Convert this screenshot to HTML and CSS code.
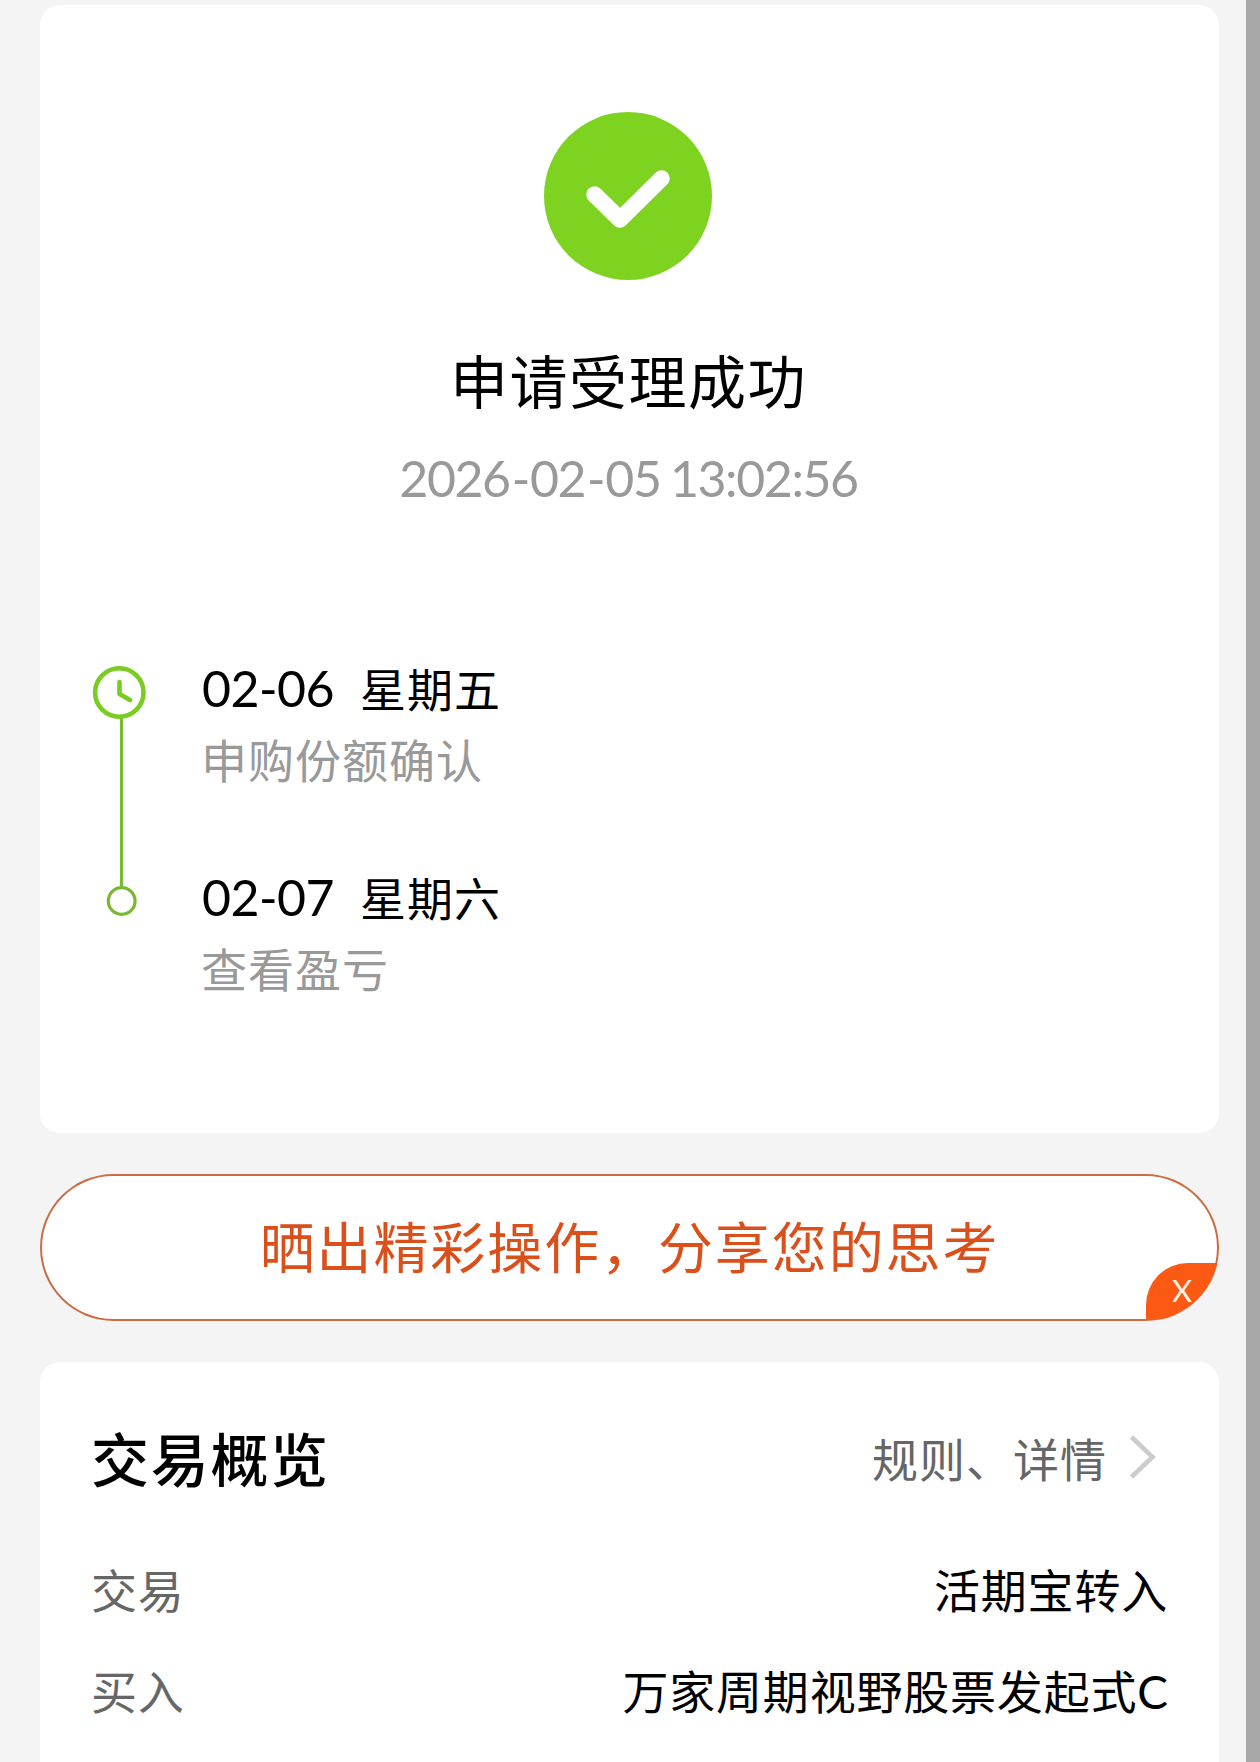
FILE: index.html
```html
<!DOCTYPE html>
<html lang="zh-CN">
	<head>
		<meta charset="UTF-8">
		<title>申请受理成功</title>
		<link rel="stylesheet" href="styles.css">
	</head>
	<body>
		<div class="card result">
			<svg class="ok" viewBox="0 0 168 168">
				<circle cx="84" cy="84" r="84" fill="#7ed321"/>
				<path d="M50.500 82.500L76 107.500L117.500 66.500" fill="none" stroke="#fff" stroke-width="16.500" stroke-linecap="round" stroke-linejoin="round"/>
			</svg>
			<h1>申请受理成功</h1>
			<p class="time num">2026<i>-</i>02<i>-</i>05 13:02:56</p>

			<div class="steps">
				<!-- 时间轴 -->
				<svg class="rail" viewBox="0 0 56 252">
					<path d="M30.500 53V222" stroke="#78b833" stroke-width="3"/>
					<circle cx="28.300" cy="27.500" r="24.200" fill="none" stroke="#7acb22" stroke-width="4.600"/>
					<path d="M28.500 17V29L39 35" fill="none" stroke="#7acb22" stroke-width="4.600" stroke-linecap="round" stroke-linejoin="round"/>
					<circle cx="30.700" cy="236" r="13.400" fill="#fff" stroke="#78b833" stroke-width="3.200"/>
				</svg>
				<ul>
					<li>
						<p class="day"><span class="num">02-06</span>星期五</p>
						<p class="desc">申购份额确认</p>
					</li>
					<li>
						<p class="day"><span class="num">02-07</span>星期六</p>
						<p class="desc">查看盈亏</p>
					</li>
				</ul>
			</div>
		</div>

		<div class="share">
			<span>晒出精彩操作，分享您的思考</span>
			<a class="close">X</a>
		</div>

		<div class="card overview">
			<div class="head">
				<h2>交易概览</h2>
				<a class="more">规则、详情
					<svg viewBox="0 0 28 46"><path d="M2.500 3L23.500 23L2.500 43" fill="none" stroke="#ccc" stroke-width="4.600"/></svg>
				</a>
			</div>
			<div class="row">
				<span class="label">交易</span>
				<span>活期宝转入</span>
			</div>
			<div class="row">
				<span class="label">买入</span>
				<span>万家周期视野股票发起式<span class="num">C</span></span>
			</div>
		</div>
	</body>
</html>
```
FILE: styles.css
```css
* {
	margin: 0;
	padding: 0;
	box-sizing: border-box;
}
ul, li {
	list-style: none;
}
body {
	height: 1762px;
	padding: 5px 27px 0 40px;
	border-right: 14px solid #a8a8a8;
	background: #f4f4f4;
	color: #000;
	font-family: "Noto Sans CJK SC", sans-serif;
	font-size: 46px;
	letter-spacing: 1px;
	overflow: hidden;
}
.num {
	font-family: Lato, "Noto Sans CJK SC", sans-serif;
	font-size: 50px;
	line-height: 1;
	letter-spacing: 0;
}

.card {
	background: #fff;
	border-radius: 20px;
}

.result {
	height: 1128px;
	padding: 107px 53px 0 51px;
	text-align: center;
}
.ok {
	display: block;
	width: 168px;
	height: 168px;
	margin: 0 0 0 453px;
}
.result h1 {
	margin-top: 59px;
	font-size: 58px;
	font-weight: 400;
	line-height: 80px;
	letter-spacing: 1.5px;
}
.time {
	margin-top: 31px;
	color: #999;
	line-height: 56px;
	letter-spacing: -1.4px;
	word-spacing: -2px;
}
.time i {
	margin: 0 1px 0 2px;
	font-style: normal;
}

.steps {
	display: flex;
	margin-top: 159px;
	text-align: left;
}
.rail {
	flex: none;
	width: 56px;
	height: 252px;
}
.steps ul {
	margin: -13px 0 0 54px;
}
.steps li {
	height: 209px;
}
.day, .desc {
	height: 71px;
	line-height: 71px;
	white-space: nowrap;
}
.day .num {
	margin: 0 26px 0 1px;
	letter-spacing: -0.5px;
}
.desc {
	color: #999;
}

.share {
	position: relative;
	height: 147px;
	margin: 41px 0;
	border-radius: 74px;
	background: #fff;
	box-shadow: inset 0 0 0 2px #cb6c42;
	overflow: hidden;
	color: #db4f1a;
	font-size: 55px;
	line-height: 141px;
	letter-spacing: 1.9px;
	text-align: center;
}
.close {
	position: absolute;
	right: 0;
	bottom: 2px;
	width: 73px;
	height: 56px;
	padding-left: 26px;
	border-radius: 42px 0 0 0;
	background: #fc5a14;
	color: #fff3e4;
	font-family: Lato, sans-serif;
	font-size: 31px;
	line-height: 55px;
	letter-spacing: 0;
	text-align: left;
}

.overview {
	height: 400px;
	padding: 48px 51px 0;
	border-radius: 20px 20px 0 0;
}
.head, .row {
	display: flex;
	justify-content: space-between;
	align-items: center;
}
.head {
	height: 94px;
	margin-bottom: 33px;
}
.head h2 {
	font-size: 58px;
	font-weight: 500;
	letter-spacing: 1.7px;
}
.more {
	display: flex;
	align-items: center;
	margin-right: 11px;
	color: #666;
}
.more svg {
	width: 28px;
	height: 46px;
	margin-left: 22px;
}
.row {
	height: 101px;
	letter-spacing: 0.8px;
}
.row .num {
	font-size: 46px;
}
.label {
	color: #666;
}
```
